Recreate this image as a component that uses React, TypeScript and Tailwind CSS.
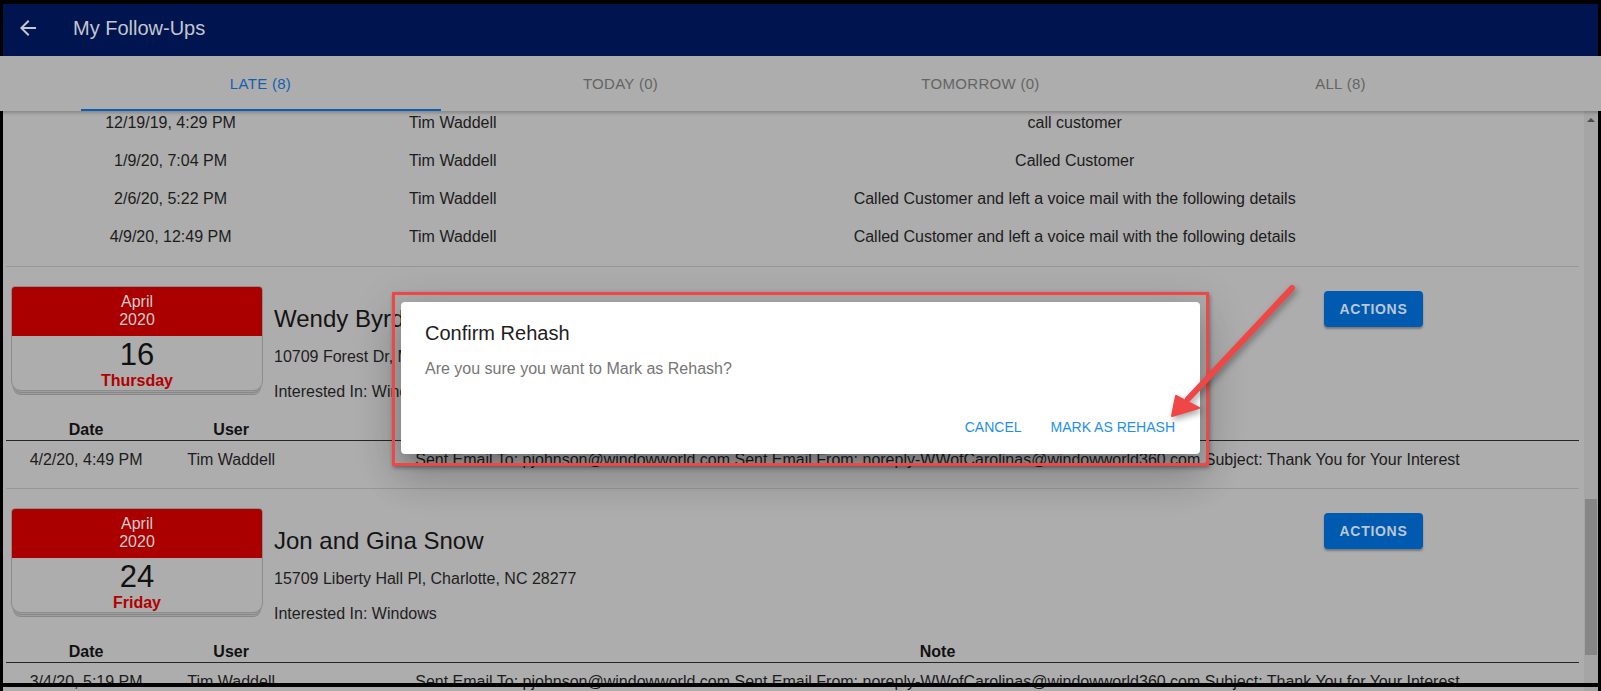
import React from "react";

const topRows: [string, string, string][] = [
  ["12/19/19, 4:29 PM", "Tim Waddell", "call customer"],
  ["1/9/20, 7:04 PM", "Tim Waddell", "Called Customer"],
  ["2/6/20, 5:22 PM", "Tim Waddell", "Called Customer and left a voice mail with the following details"],
  ["4/9/20, 12:49 PM", "Tim Waddell", "Called Customer and left a voice mail with the following details"],
];

const NOTE =
  "Sent Email To: pjohnson@windowworld.com Sent Email From: noreply-WWofCarolinas@windowworld360.com Subject: Thank You for Your Interest";

type Item = {
  month: string;
  year: string;
  day: string;
  weekday: string;
  name: string;
  address: string;
  interested: string;
  row: [string, string, string];
};

const items: Item[] = [
  {
    month: "April",
    year: "2020",
    day: "16",
    weekday: "Thursday",
    name: "Wendy Byrd",
    address: "10709 Forest Dr, Mint Hill, NC 28227",
    interested: "Windows",
    row: ["4/2/20, 4:49 PM", "Tim Waddell", NOTE],
  },
  {
    month: "April",
    year: "2020",
    day: "24",
    weekday: "Friday",
    name: "Jon and Gina Snow",
    address: "15709 Liberty Hall Pl, Charlotte, NC 28277",
    interested: "Windows",
    row: ["3/4/20, 5:19 PM", "Tim Waddell", NOTE],
  },
];

function CalendarCard({ it }: { it: Item }) {
  return (
    <div className="w-[252px] shrink-0 overflow-hidden rounded-t-[4px] rounded-b-[10px] border border-[#8c8c8c] shadow-[0_2px_0_-1px_#9e9e9e,0_3px_0_-1px_#888888,0_5px_0_-2px_#9e9e9e,0_6px_0_-2px_#888888]">
      <div className="bg-[#aa0000] pt-[6px] pb-[7px] text-center text-[16px] leading-[18px] text-[#d3cccc]">
        <div>{it.month}</div>
        <div>{it.year}</div>
      </div>
      <div className="text-center">
        <div className="pt-[2px] text-[31px] leading-[34px] text-[#111111]">{it.day}</div>
        <div className="text-[16px] font-bold leading-[18px] text-[#b20000]">{it.weekday}</div>
      </div>
    </div>
  );
}

function FollowUp({ it }: { it: Item }) {
  return (
    <div className="border-b border-[#979797] pb-[9px]">
      <div className="flex items-start pt-[19px]">
        <div className="ml-[5px]">
          <CalendarCard it={it} />
        </div>
        <div className="ml-[11px] mt-[19px] flex-1">
          <div className="text-[24px] leading-[28px] text-[#141414]">{it.name}</div>
          <div className="mt-[15px] text-[16px] leading-[18px] text-[#1e1e1e]">{it.address}</div>
          <div className="mt-[17px] text-[16px] leading-[18px] text-[#1e1e1e]">
            Interested In: {it.interested}
          </div>
        </div>
        <button className="mr-[156px] mt-[5px] h-[36px] w-[99px] rounded-[4px] bg-[#005aaf] text-[14px] font-bold tracking-[0.05em] text-[#bcc6d4] shadow-[0_2px_2px_rgba(0,0,0,0.3)]">
          ACTIONS
        </button>
      </div>
      <table className="mt-[20px] w-full border-collapse text-[16px] leading-[18px] text-[#1c1c1c]">
        <thead>
          <tr className="border-b border-[#262626]">
            <th className="px-[10px] pb-[1px] pt-0 text-center font-bold text-[#111111]">Date</th>
            <th className="px-[10px] pb-[1px] pt-0 text-center font-bold text-[#111111]">User</th>
            <th className="px-[10px] pb-[1px] pt-0 text-center font-bold text-[#111111]">Note</th>
          </tr>
        </thead>
        <tbody>
          <tr>
            {it.row.map((c, i) => (
              <td key={i} className="whitespace-nowrap p-[10px] text-center">
                {c}
              </td>
            ))}
          </tr>
        </tbody>
      </table>
    </div>
  );
}

export default function App() {
  const tabs = ["LATE (8)", "TODAY (0)", "TOMORROW (0)", "ALL (8)"];
  return (
    <div className="relative h-[691px] w-[1601px] overflow-hidden bg-[#adadad] font-['Liberation_Sans',Arial,sans-serif]">
      <div className="flex h-full flex-col">
        {/* App bar */}
        <div className="flex h-[56px] shrink-0 items-center bg-[#001450] px-[16px]">
          <svg width="24" height="24" viewBox="0 0 24 24" className="mt-[-1px]">
            <path fill="#c6c8ce" d="M20 11H7.83l5.59-5.59L12 4l-8 8 8 8 1.41-1.41L7.83 13H20v-2z" />
          </svg>
          <div className="ml-[33px] text-[20px] font-medium leading-[24px] text-[#c4c6cc]">My Follow-Ups</div>
        </div>

        {/* Tabs */}
        <div className="relative z-10 flex h-[55px] shrink-0 justify-center bg-[#adadad] shadow-[0_2px_3px_rgba(0,0,0,0.22)]">
          {tabs.map((t, i) => (
            <div
              key={t}
              className={
                i === 0
                  ? "flex w-[360px] items-center justify-center border-b-2 border-[#0b5cb5] pt-[4px] text-[15px] tracking-[0.02em] text-[#145fb4]"
                  : "flex w-[360px] items-center justify-center border-b-2 border-transparent pt-[4px] text-[15px] tracking-[0.02em] text-[#646464]"
              }
            >
              {t}
            </div>
          ))}
        </div>

        {/* Body */}
        <div className="flex min-h-0 flex-1 pr-[3px]">
          <div className="min-w-0 flex-1 overflow-hidden pl-[6px] pr-[5px]">
            <div className="-mt-[7px] border-b border-[#979797] pb-[10px]">
              <table className="w-full border-collapse text-[16px] leading-[18px] text-[#1c1c1c]">
                <tbody>
                  {topRows.map((r, i) => (
                    <tr key={i}>
                      {r.map((c, j) => (
                        <td key={j} className="whitespace-nowrap p-[10px] text-center">
                          {c}
                        </td>
                      ))}
                    </tr>
                  ))}
                </tbody>
              </table>
            </div>
            {items.map((it) => (
              <FollowUp key={it.name} it={it} />
            ))}
          </div>
          {/* Scrollbar */}
          <div className="flex w-[14px] shrink-0 flex-col bg-[#a5a5a5]">
            <div className="flex h-[17px] items-center justify-center">
              <div className="h-0 w-0 border-x-[4px] border-b-[4px] border-x-transparent border-b-[#4a4a4a]" />
            </div>
            <div className="mx-[1px] mt-[371px] h-[156px] bg-[#868686]" />
          </div>
        </div>
      </div>

      {/* Dialog */}
      <div className="absolute left-[401px] top-[302px] flex h-[152px] w-[799px] flex-col rounded-[4px] bg-white shadow-[0_11px_15px_-7px_rgba(0,0,0,0.2),0_24px_38px_3px_rgba(0,0,0,0.14),0_9px_46px_8px_rgba(0,0,0,0.12)]">
        <div className="px-[24px] pt-[19px] text-[20px] leading-[24px] text-[#1e1e1e]">Confirm Rehash</div>
        <div className="mt-[15px] px-[24px] text-[16px] leading-[18px] text-[#767676]">
          Are you sure you want to Mark as Rehash?
        </div>
        <div className="mt-auto flex justify-end pb-[18px] pr-[25px] text-[14px] leading-[18px] text-[#1e8ff0]">
          <span>CANCEL</span>
          <span className="ml-[29px]">MARK AS REHASH</span>
        </div>
      </div>

      {/* Annotation rectangle */}
      <div className="pointer-events-none absolute left-[392px] top-[292px] h-[174px] w-[817px] border-[3px] border-[#ef4646] shadow-[1px_2px_4px_rgba(0,0,0,0.35)]" />

      {/* Annotation arrow */}
      <svg
        className="pointer-events-none absolute left-0 top-0"
        width="1601"
        height="691"
        viewBox="0 0 1601 691"
        style={{ filter: "drop-shadow(2px 3px 3px rgba(0,0,0,0.35))" }}
      >
        <line x1="1292" y1="288" x2="1188" y2="399" stroke="#ef4646" strokeWidth="6" strokeLinecap="round" />
        <polygon points="1172,416 1176,396 1199,408" fill="#ef4646" stroke="#ef4646" strokeWidth="2" strokeLinejoin="round" />
      </svg>

      {/* Screenshot frame */}
      <div className="pointer-events-none absolute left-0 top-0 h-[691px] w-[1601px] border-x-[3px] border-t-[4px] border-black" />
      <div className="pointer-events-none absolute left-0 top-[683px] h-[4px] w-[1601px] bg-black" />
    </div>
  );
}
